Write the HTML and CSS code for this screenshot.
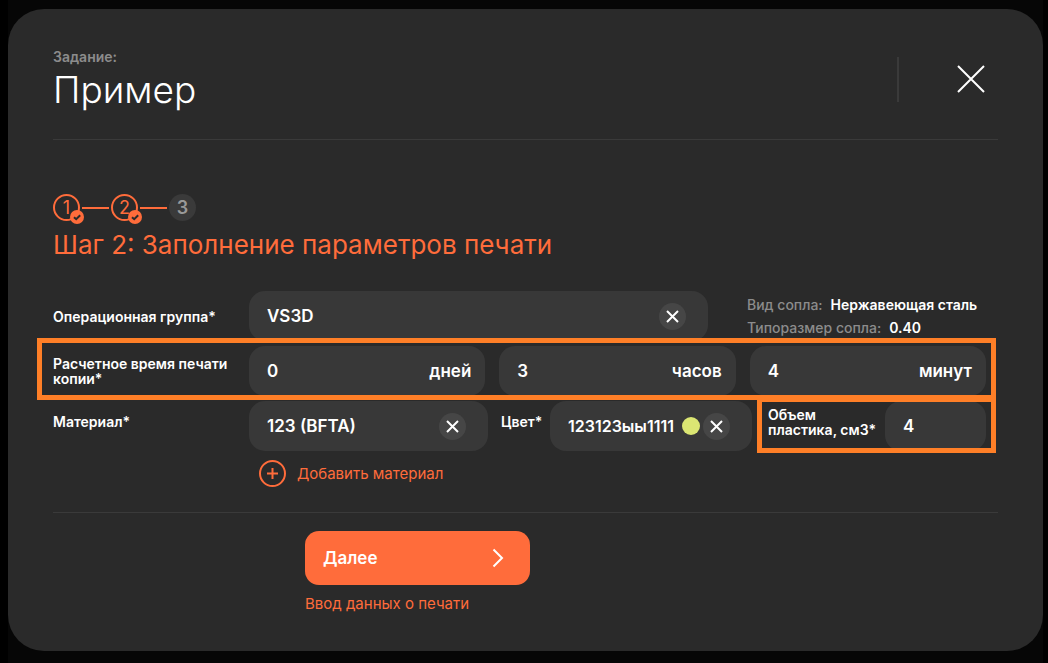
FILE: index.html
```html
<!DOCTYPE html>
<html lang="ru">
<head>
<meta charset="utf-8">
<meta name="viewport" content="width=device-width, initial-scale=1">
<title>Пример</title>
<link rel="stylesheet" href="styles.css">
</head>
<body>
<div class="backdrop">
<main class="modal">
  <header class="head">
    <div class="head-text">
      <p class="head-label">Задание:</p>
      <h1 class="head-title">Пример</h1>
    </div>
    <button class="close" type="button" aria-label="Закрыть">
      <svg width="30" height="30" viewBox="0 0 30 30"><path d="M2 2 28 28M28 2 2 28"/></svg>
    </button>
  </header>

  <ol class="steps">
    <li class="step done">1
      <svg class="check" width="14" height="14" viewBox="0 0 14 14"><circle cx="7" cy="7" r="7"/><path d="M4 7.2 6.2 9.2 10.2 5.2"/></svg>
    </li>
    <li class="line"></li>
    <li class="step done">2
      <svg class="check" width="14" height="14" viewBox="0 0 14 14"><circle cx="7" cy="7" r="7"/><path d="M4 7.2 6.2 9.2 10.2 5.2"/></svg>
    </li>
    <li class="line"></li>
    <li class="step">3</li>
  </ol>
  <h2 class="step-title">Шаг 2: Заполнение параметров печати</h2>

  <form class="form">
    <div class="row">
      <label class="label" for="group">Операционная группа*</label>
      <div class="cells group-cells">
        <div class="field">
          <input id="group" type="text" value="VS3D">
          <button class="clear" type="button" aria-label="Очистить группу"><svg width="13" height="13" viewBox="0 0 13 13"><path d="M1 1 12 12M12 1 1 12"/></svg></button>
        </div>
        <dl class="nozzle">
          <div><dt>Вид сопла:</dt><dd>Нержавеющая сталь</dd></div>
          <div><dt>Типоразмер сопла:</dt><dd>0.40</dd></div>
        </dl>
      </div>
    </div>

    <div class="row marked-row">
      <label class="label" for="days">Расчетное время печати копии*</label>
      <div class="cells time-cells">
        <div class="field unit-field"><input id="days" type="text" value="0"><label for="days">дней</label></div>
        <div class="field unit-field"><input id="hours" type="text" value="3"><label for="hours">часов</label></div>
        <div class="field unit-field"><input id="minutes" type="text" value="4"><label for="minutes">минут</label></div>
      </div>
    </div>

    <div class="row">
      <label class="label label-high" for="material">Материал*</label>
      <div class="cells material-cells">
        <div class="field">
          <input id="material" type="text" value="123 (BFTA)">
          <button class="clear" type="button" aria-label="Очистить материал"><svg width="13" height="13" viewBox="0 0 13 13"><path d="M1 1 12 12M12 1 1 12"/></svg></button>
        </div>
        <label class="label label-high color-label" for="color">Цвет*</label>
        <div class="field color-field">
          <input id="color" type="text" value="123123ыы1111">
          <span class="swatch"></span>
          <button class="clear" type="button" aria-label="Очистить цвет"><svg width="13" height="13" viewBox="0 0 13 13"><path d="M1 1 12 12M12 1 1 12"/></svg></button>
        </div>
        <div class="volume">
          <label class="label label-high" for="volume">Объем пластика, см3*</label>
          <div class="field"><input id="volume" type="text" value="4"></div>
        </div>
      </div>
    </div>

    <button class="add" type="button">
      <svg width="27" height="27" viewBox="0 0 27 27"><circle cx="13.5" cy="13.5" r="12.5"/><path d="M8 13.5H19M13.5 8V19"/></svg>
      Добавить материал
    </button>
  </form>

  <footer class="foot">
    <button class="next" type="button">Далее
      <svg width="12" height="20" viewBox="0 0 12 20"><path d="M1.5 1.5 10 10 1.5 18.5"/></svg>
    </button>
    <p class="hint">Ввод данных о печати</p>
  </footer>
</main>
</div>
</body>
</html>
```
FILE: styles.css
```css
* {
  box-sizing: border-box;
}

body {
  margin: 0;
  padding: 0 5px 0 8px;
  background: #000;
  color: #fff;
  font: 500 15px/20px Inter, "Open Sans", sans-serif;
}

p, h1, h2, ol, dl, dd {
  margin: 0;
  padding: 0;
}

button, input {
  border: 0;
  padding: 0;
  background: none;
  color: inherit;
  font: inherit;
}

button {
  cursor: pointer;
}

svg {
  display: block;
  fill: none;
  stroke: currentColor;
  stroke-width: 2;
}

.backdrop {
  min-height: 100vh;
  padding: 9px 0 12px;
  background: #060606;
}

.modal {
  padding: 38px 45px 37px;
  border-radius: 36px;
  background: #2a2a2a;
}

.head {
  display: flex;
  justify-content: space-between;
  align-items: center;
  padding-bottom: 28px;
  border-bottom: 1px solid #3a3a3a;
}

.head-label {
  color: #8c8c8c;
  font-size: 14px;
  font-weight: 600;
}

.head-title {
  margin-top: 2px;
  font-size: 37px;
  font-weight: 300;
  line-height: 42px;
}

.close {
  display: flex;
  align-items: center;
  height: 45px;
  padding: 0 12px 0 57px;
  border-left: 2px solid #3a3a3a;
}

.steps {
  display: flex;
  align-items: center;
  gap: 2px;
  margin-top: 54px;
  list-style: none;
}

.step {
  position: relative;
  width: 27px;
  height: 27px;
  border-radius: 50%;
  background: #3a3a3a;
  color: #999;
  font-size: 18px;
  font-weight: 600;
  line-height: 27px;
  text-align: center;
}

.step.done {
  border: 2px solid #ff6c3b;
  background: none;
  color: #ff6c3b;
  font-weight: 400;
  line-height: 24px;
}

.check {
  position: absolute;
  right: -6px;
  bottom: -5px;
}

.check circle {
  fill: #ff6c3b;
  stroke: none;
}

.check path {
  stroke: #2a2a2a;
}

.line {
  width: 27px;
  height: 2px;
  background: #ff6c3b;
}

.step-title {
  margin-top: 8px;
  color: #ff6c3b;
  font-size: 26px;
  font-weight: 400;
  line-height: 32px;
}

.form {
  display: flex;
  flex-direction: column;
  gap: 5px;
  margin-top: 30px;
  padding: 0 12px 25px 0;
  border-bottom: 1px solid #3a3a3a;
}

.row {
  position: relative;
  display: grid;
  grid-template-columns: 192px minmax(0, 1fr);
  column-gap: 4px;
  align-items: center;
}

.label {
  font-size: 14px;
  font-weight: 600;
  line-height: 15px;
}

.label-high {
  align-self: start;
  padding-top: 13px;
}

.cells {
  display: grid;
  align-items: center;
}

.group-cells {
  grid-template-columns: minmax(0, 459fr) minmax(0, 239fr);
  column-gap: 39px;
}

.time-cells {
  grid-template-columns: repeat(3, minmax(0, 1fr));
  column-gap: 14px;
}

.material-cells {
  grid-template-columns: minmax(0, 239fr) 62px minmax(0, 202fr) 234px;
}

.field {
  display: flex;
  align-items: center;
  height: 50px;
  padding: 0 22px 0 18px;
  border-radius: 16px;
  background: #383838;
  font-size: 17px;
  font-weight: 600;
}

.field input {
  flex: 1;
  min-width: 0;
  width: 100%;
  outline: 0;
}

.unit-field {
  padding-right: 14px;
}

.color-field {
  font-size: 16px;
}

.clear {
  display: grid;
  flex: none;
  place-items: center;
  width: 27px;
  height: 27px;
  border-radius: 50%;
  background: #464646;
}

.swatch {
  flex: none;
  width: 18px;
  height: 18px;
  margin-right: 3px;
  border-radius: 50%;
  background: #dbe673;
}

.color-label {
  padding-left: 13px;
}

.nozzle {
  display: grid;
  gap: 3px;
  font-size: 14px;
  font-weight: 600;
  white-space: nowrap;
}

.nozzle div {
  display: flex;
  gap: 8px;
}

.nozzle dt {
  color: #8c8c8c;
  font-weight: 500;
}

.volume {
  position: relative;
  display: grid;
  grid-template-columns: 1fr 101px;
  padding-left: 16px;
}

.volume .label-high {
  padding-top: 6px;
}

/* highlight frames drawn over the rows */
.marked-row::after,
.volume::after {
  content: "";
  position: absolute;
  border: 5px solid #ff7f27;
  pointer-events: none;
}

.marked-row::after {
  inset: -8px -10px -4px -16px;
}

.volume::after {
  inset: -4px -10px -2px 5px;
}

.add {
  display: flex;
  align-items: center;
  align-self: flex-start;
  gap: 11px;
  margin: 4px 0 0 206px;
  color: #ff6c3b;
  font-weight: 400;
}

.foot {
  padding: 18px 0 0 252px;
}

.next {
  display: flex;
  justify-content: space-between;
  align-items: center;
  width: 225px;
  height: 54px;
  padding: 0 26px 0 18px;
  border-radius: 14px;
  background: #ff6c3b;
  font-size: 17px;
  font-weight: 600;
}

.hint {
  margin-top: 9px;
  color: #ff6c3b;
  font-weight: 400;
}
```
